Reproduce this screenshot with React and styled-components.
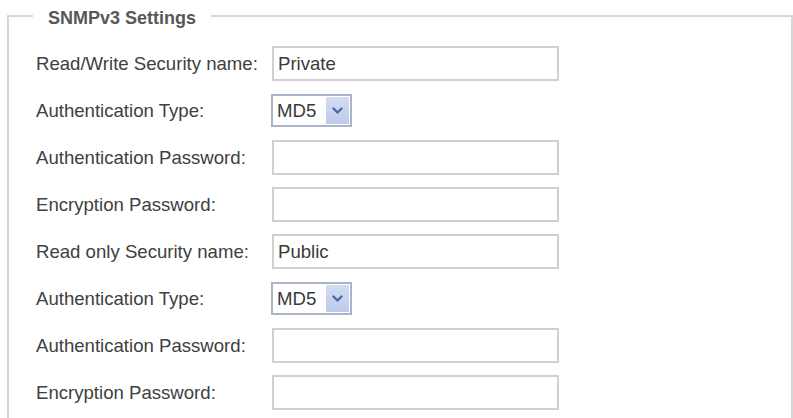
import React from "react";
import styled, { createGlobalStyle } from "styled-components";

const Global = createGlobalStyle`
  html, body { margin: 0; padding: 0; background: #ffffff; }
  body { font-family: "Liberation Sans", Arial, sans-serif; }
`;

const Fieldset = styled.fieldset`
  margin: 2px 0 0 7px;
  padding: 11px 20px 30px 27px;
  border: 2px solid #d8d8d8;
  min-width: 0;
`;

const Legend = styled.legend`
  margin-left: -3px;
  padding: 6px 15px 0;
  font-size: 18px;
  font-weight: bold;
  color: #585858;
  line-height: normal;
`;

const Form = styled.div`
  display: grid;
  grid-template-columns: 236px auto;
  grid-auto-rows: 47px;
  align-items: center;
  justify-items: start;
`;

const Label = styled.label`
  font-size: 18.6px;
  color: #404040;
  white-space: nowrap;
`;

const TextInput = styled.input`
  box-sizing: border-box;
  width: 287px;
  height: 35px;
  border: 2px solid #d0d0d0;
  background: #ffffff;
  padding: 0 0 0 4px;
  font-family: "Liberation Sans", Arial, sans-serif;
  font-size: 18.6px;
  color: #3a3a3a;
  outline: none;
`;

const Select = styled.div`
  box-sizing: border-box;
  width: 81px;
  height: 33px;
  margin-left: -1px;
  border: 2px solid #aab4c8;
  background: #ffffff;
  display: flex;
  align-items: stretch;
  padding: 1px;
`;

const SelectValue = styled.span`
  flex: 1;
  display: flex;
  align-items: center;
  padding-left: 3px;
  font-size: 18.6px;
  color: #3a3a3a;
`;

const DropButton = styled.span`
  width: 23px;
  background: linear-gradient(#d3ddf3, #bccbeb);
  display: flex;
  align-items: center;
  justify-content: center;
`;

const Chevron = () => (
  <svg width="11" height="8" viewBox="0 0 11 8">
    <path d="M1.5 1.5 L5.5 5.5 L9.5 1.5" fill="none" stroke="#4d68a6" strokeWidth="2.4" strokeLinecap="round" strokeLinejoin="round" />
  </svg>
);

const rows = [
  { label: "Read/Write Security name:", type: "text", value: "Private" },
  { label: "Authentication Type:", type: "select", value: "MD5" },
  { label: "Authentication Password:", type: "text", value: "" },
  { label: "Encryption Password:", type: "text", value: "" },
  { label: "Read only Security name:", type: "text", value: "Public" },
  { label: "Authentication Type:", type: "select", value: "MD5" },
  { label: "Authentication Password:", type: "text", value: "" },
  { label: "Encryption Password:", type: "text", value: "" },
];

export default function App() {
  return (
    <>
      <Global />
      <Fieldset>
        <Legend>SNMPv3 Settings</Legend>
        <Form>
          {rows.map((r, i) => (
            <React.Fragment key={i}>
              <Label>{r.label}</Label>
              {r.type === "select" ? (
                <Select>
                  <SelectValue>{r.value}</SelectValue>
                  <DropButton>
                    <Chevron />
                  </DropButton>
                </Select>
              ) : (
                <TextInput type="text" defaultValue={r.value} />
              )}
            </React.Fragment>
          ))}
        </Form>
      </Fieldset>
    </>
  );
}
